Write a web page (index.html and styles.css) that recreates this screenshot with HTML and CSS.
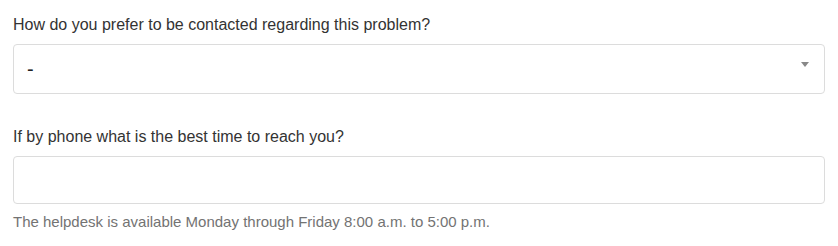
FILE: index.html
```html
<!DOCTYPE html>
<html>
<head>
<meta charset="utf-8">
<link rel="stylesheet" href="styles.css">
</head>
<body>
<form class="form">
  <div class="field">
    <label class="label">How do you prefer to be contacted regarding this problem?</label>
    <div class="select">
      <span class="select-value">-</span>
      <span class="select-arrow"></span>
    </div>
  </div>
  <div class="field field-last">
    <label class="label">If by phone what is the best time to reach you?</label>
    <div class="input"></div>
    <p class="help">The helpdesk is available Monday through Friday 8:00 a.m. to 5:00 p.m.</p>
  </div>
</form>
</body>
</html>
```
FILE: styles.css
```css
html, body {
  margin: 0;
  padding: 0;
  background: #fff;
}
.form {
  padding: 15px 13px 0 13px;
  font-family: "Liberation Sans", Arial, sans-serif;
  color: #333;
}
.field {
  margin-bottom: 33px;
}
.field-last {
  margin-bottom: 0;
}
.label {
  display: block;
  font-size: 16px;
  line-height: 20px;
  margin-bottom: 9px;
}
.select {
  box-sizing: border-box;
  height: 50px;
  border: 1px solid #dcdcdc;
  border-radius: 4px;
  display: flex;
  align-items: center;
  justify-content: space-between;
  padding: 0 15px 0 13px;
}
.select-value {
  font-size: 20px;
  color: #222;
}
.select-arrow {
  width: 0;
  height: 0;
  border-left: 4px solid transparent;
  border-right: 4px solid transparent;
  border-top: 5px solid #888;
  margin-top: -10px;
}
.input {
  box-sizing: border-box;
  height: 48px;
  border: 1px solid #dcdcdc;
  border-radius: 4px;
}
.help {
  margin: 8px 0 0 0;
  font-size: 15px;
  line-height: 20px;
  color: #737373;
}
```
